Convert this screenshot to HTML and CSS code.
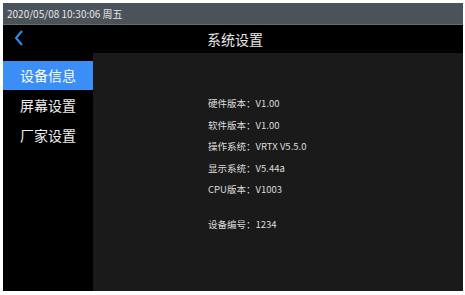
FILE: index.html
```html
<!DOCTYPE html>
<html lang="zh">
<head>
  <meta charset="UTF-8">
  <title>系统设置</title>
  <link rel="stylesheet" href="styles.css">
</head>
<body>
  <div class="screen">
    <div class="statusbar">2020/05/08 10:30:06 周五</div>
    <div class="header">
      <svg class="back" width="12" height="18" viewBox="0 0 12 18">
        <polyline points="9,2 3,9 9,16" fill="none" stroke="#2f8ff0" stroke-width="2"/>
      </svg>
      <div class="title">系统设置</div>
    </div>
    <div class="main">
      <div class="sidebar">
        <div class="menu-item active">设备信息</div>
        <div class="menu-item">屏幕设置</div>
        <div class="menu-item">厂家设置</div>
      </div>
      <div class="content">
        <div class="info">硬件版本：V1.00</div>
        <div class="info">软件版本：V1.00</div>
        <div class="info">操作系统：VRTX V5.5.0</div>
        <div class="info">显示系统：V5.44a</div>
        <div class="info">CPU版本：V1003</div>
        <div class="info gap">设备编号：1234</div>
      </div>
    </div>
  </div>
</body>
</html>
```

FILE: styles.css
```css
body {
  margin: 0;
  background: #fff;
  font-family: "Noto Sans CJK SC", "Noto Sans", sans-serif;
}
.screen {
  margin: 3px 0 0 3px;
  width: 460px;
  height: 288px;
  display: flex;
  flex-direction: column;
  background: #000;
}
.statusbar {
  height: 21px;
  background: #4b535a;
  border-bottom: 1px solid #646c72;
  color: #e6e6e6;
  font-size: 10px;
  line-height: 21px;
  padding-left: 4px;
}
.header {
  height: 28px;
  position: relative;
  display: flex;
  align-items: center;
  justify-content: center;
}
.back {
  position: absolute;
  left: 10px;
  top: 4px;
}
.title {
  color: #e8e8e8;
  font-size: 14px;
  margin-left: 4px;
}
.main {
  flex: 1;
  display: flex;
}
.sidebar {
  width: 90px;
  padding-top: 8px;
}
.menu-item {
  height: 29px;
  line-height: 29px;
  margin-bottom: 1px;
  color: #eee;
  font-size: 14px;
  text-align: center;
}
.active {
  background: #3a8ef5;
  color: #fff;
}
.content {
  flex: 1;
  background: #1a1a1a;
  padding: 42px 0 0 115px;
}
.info {
  color: #dcdcdc;
  font-size: 9.5px;
  height: 21.5px;
  line-height: 16px;
}
.gap {
  margin-top: 13px;
}
```
